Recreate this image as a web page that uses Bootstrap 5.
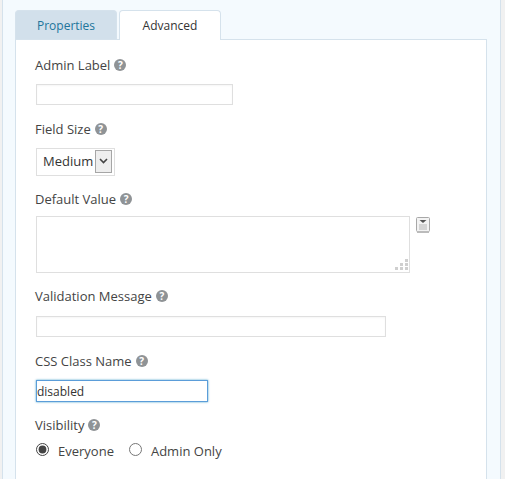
<!DOCTYPE html>
<html lang="en">
<head>
<meta charset="utf-8">
<title>Field settings</title>
<link rel="stylesheet" href="https://cdn.jsdelivr.net/npm/bootstrap@5.3.0/dist/css/bootstrap.min.css">
<style>
html,body{height:479px;overflow:hidden}
body{background:#f1f1f1;font-family:"Open Sans",sans-serif;font-size:13px;color:#444;line-height:18px}
.shell{margin:0 4px 0 2px;height:479px;background:#f4fafe;border-left:1px solid #d5e2ec;border-right:1px solid #d5e2ec;padding:10px 13px 0 12px}
.tabrow{height:29px;gap:2px;border:0;margin:0;list-style:none;padding:0}
.tabrow .nav-link{height:29px;border-radius:4px 4px 0 0;font-size:12px;line-height:18px;padding:6px 0 0;text-align:center;border:1px solid #d5e2ec;border-bottom:0}
.tab-off{width:102px;background:#d2e0eb;color:#21759b}
.tab-off:hover{color:#21759b}
.tab-on{width:102px;background:#fff;color:#333;position:relative;z-index:1;height:30px!important}
.pane{background:#fff;border:1px solid #d5e2ec;height:441px;padding:16px 0 0 19px}
.lbl{display:flex;align-items:center;gap:4px;margin:0;height:18px;font-size:13px;color:#444}
.qm{display:inline-block;width:12px;height:12px;border-radius:50%;background:#8f9396;color:#fff;font:700 10px/12px "Open Sans",sans-serif;text-align:center}
.ctl{display:block;height:21px;border:1px solid #dfdfdf;background:#fff;border-radius:0;padding:0;margin-left:1px;font-family:"Open Sans",sans-serif;font-size:12px;color:#333;box-shadow:inset 0 1px 2px rgba(0,0,0,.04);outline:0}
.w-a{width:197px;margin-top:10px}
.w-b{width:350px;margin-top:11px}
.w-c{width:172px;margin-top:10px;height:22px;border-color:#5b9dd9;box-shadow:0 0 2px rgba(30,140,190,.8)}
.sel{display:flex;align-items:center;width:79px;height:28px;margin:10px 0 0 1px;border:1px solid #dfdfdf;padding:0 0 2px 6px;font-size:13px;color:#333;justify-content:space-between}
.arrow{display:flex;align-items:center;justify-content:center;width:17px;height:23px;margin-right:2px;background:#eee;border:1px solid #a6a6a6}
.ta-row{display:flex;align-items:flex-start;margin-top:8px;gap:6px}
.tarea{width:374px;height:57px;margin:0 0 0 1px;border:1px solid #dfdfdf;position:relative;background:#fff}
.grip{position:absolute;right:0;bottom:1px}
.docbtn{margin-top:1px}
.radios{display:flex;align-items:center;margin-top:8px;padding-left:1px;font-size:13px}
.rad{width:13px;height:13px;margin:0 0 3px;accent-color:#444;flex:none}
.rgap{margin:0 15px 0 9px}
.rgap2{margin-left:9px}
.mt-a{margin-top:15px}.mt-b{margin-top:14px}.mt-d{margin-top:15px}
</style>
</head>
<body>
<div class="shell">
  <ul class="nav tabrow">
    <li class="nav-item"><a class="nav-link tab-off" href="#">Properties</a></li>
    <li class="nav-item"><a class="nav-link tab-on" href="#">Advanced</a></li>
  </ul>
  <div class="pane">
    <div>
      <label class="lbl">Admin Label <span class="qm">?</span></label>
      <input class="ctl w-a" type="text">
    </div>
    <div class="mt-a">
      <label class="lbl">Field Size <span class="qm">?</span></label>
      <div class="sel"><span>Medium</span><span class="arrow"><svg width="9" height="6" viewBox="0 0 9 6"><path d="M1 1l3.500 3.500L8 1" fill="none" stroke="#444" stroke-width="1.600"/></svg></span></div>
    </div>
    <div class="mt-b">
      <label class="lbl">Default Value <span class="qm">?</span></label>
      <div class="ta-row">
        <div class="tarea">
          <svg class="grip" width="14" height="13" viewBox="0 0 14 13" fill="#cfcfcf"><rect x="10" y="1" width="3" height="3"/><rect x="5" y="5" width="3" height="3"/><rect x="10" y="5" width="3" height="3"/><rect x="0" y="9" width="3" height="3"/><rect x="5" y="9" width="3" height="3"/><rect x="10" y="9" width="3" height="3"/></svg>
        </div>
        <svg class="docbtn" width="14" height="16" viewBox="0 0 14 16"><rect x=".5" y=".5" width="13" height="14" rx="1" fill="#f3f3f3" stroke="#a8a8a8"/><rect x="1" y="14" width="12" height="2" fill="#bbb"/><path d="M3.500 3h7L7 6z" fill="#555"/><path d="M3 8h8M3 10h8M3 12h8" stroke="#b5b5b5"/></svg>
      </div>
    </div>
    <div class="mt-b">
      <label class="lbl">Validation Message <span class="qm">?</span></label>
      <input class="ctl w-b" type="text">
    </div>
    <div class="mt-d">
      <label class="lbl">CSS Class Name <span class="qm">?</span></label>
      <input class="ctl w-c" type="text" value="disabled">
    </div>
    <div class="mt-b">
      <label class="lbl">Visibility <span class="qm">?</span></label>
      <div class="radios">
        <input class="rad" type="radio" name="vis" checked><span class="rgap">Everyone</span>
        <input class="rad" type="radio" name="vis"><span class="rgap2">Admin Only</span>
      </div>
    </div>
  </div>
</div>
<script src="https://cdn.jsdelivr.net/npm/bootstrap@5.3.0/dist/js/bootstrap.bundle.min.js"></script>
</body>
</html>
